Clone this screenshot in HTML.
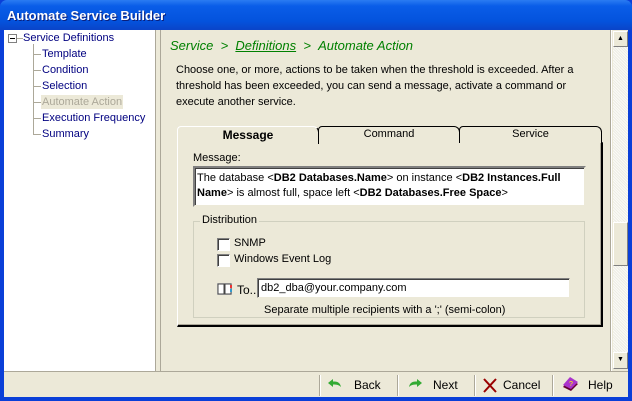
<!DOCTYPE html>
<html><head><style>
*{margin:0;padding:0;box-sizing:border-box}
body{width:632px;height:401px;position:relative;overflow:hidden;font-family:"Liberation Sans",sans-serif;font-size:11px;background:#0a3fd8}
.a{position:absolute}
#title{left:0;top:0;width:632px;height:30px;background:linear-gradient(#2b7cf2,#0a5de8 20%,#0453dd 70%,#0a44c8);border-radius:7px 7px 0 0;color:#fff;font-weight:bold;font-size:13px;padding:8px 0 0 7px;text-shadow:1px 1px #0a1e7a}
#win{left:4px;top:30px;width:624px;height:367px;background:#ece9d8}
#tree{left:4px;top:30px;width:152px;height:341px;background:#fff;border-right:1px solid #aca899}
.t{position:absolute;color:#000080;font-size:11px;white-space:nowrap}
.ln{position:absolute;background:#aca899}
.chk{position:absolute;width:13px;height:13px;background:#fff;border:1px solid #7f9db9;border-color:#808080 #fff #fff #808080;box-shadow:inset 1px 1px #404040}
.tab{position:absolute;top:126px;height:17px;background:#ece9d8;border:1px solid #000;border-bottom:none;border-radius:4px 6px 0 0;text-align:center;font-size:11px;padding-top:1px}
.btn{position:absolute;top:378px;font-size:12px}
.sep{position:absolute;top:375px;width:2px;height:21px;border-left:1px solid #aca899;border-right:1px solid #fff}
</style></head><body>
<div class="a" id="title">Automate Service Builder</div>
<div class="a" id="win"></div>
<div class="a" id="tree"></div>
<div class="a" style="left:160px;top:30px;width:1px;height:341px;background:#aca899"></div>
<div class="a" style="left:4px;top:371px;width:624px;height:1px;background:#aca899"></div>
<div class="a" style="left:8px;top:34px;width:9px;height:9px;border:1px solid #808080;background:#fff"></div>
<div class="ln" style="left:10px;top:38px;width:5px;height:1px;background:#000"></div>
<div class="ln" style="left:17px;top:38px;width:6px;height:1px"></div>
<div class="t" style="left:23px;top:32px">Service Definitions</div>
<div class="ln" style="left:33px;top:44px;width:1px;height:90px"></div>
<div class="ln" style="left:33px;top:54px;width:8px;height:1px"></div>
<div class="ln" style="left:33px;top:70px;width:8px;height:1px"></div>
<div class="ln" style="left:33px;top:86px;width:8px;height:1px"></div>
<div class="ln" style="left:33px;top:102px;width:8px;height:1px"></div>
<div class="ln" style="left:33px;top:118px;width:8px;height:1px"></div>
<div class="ln" style="left:33px;top:134px;width:8px;height:1px"></div>
<div class="t" style="left:42px;top:48px">Template</div>
<div class="t" style="left:42px;top:64px">Condition</div>
<div class="t" style="left:42px;top:80px">Selection</div>
<div class="t" style="left:41px;top:95px;background:#ece9d8;color:#aca899;padding:1px 1px">Automate Action</div>
<div class="t" style="left:42px;top:112px">Execution Frequency</div>
<div class="t" style="left:42px;top:128px">Summary</div>
<div class="a" style="left:170px;top:38px;color:#008000;font-style:italic;font-size:13px;white-space:nowrap">Service &nbsp;&gt; &nbsp;<u>Definitions</u> &nbsp;&gt; &nbsp;Automate Action</div>
<div class="a" style="left:176px;top:62px;width:420px;line-height:16px;font-size:11px;color:#000">Choose one, or more, actions to be taken when the threshold is exceeded. After a threshold has been exceeded, you can send a message, activate a command or execute another service.</div>
<div class="a" style="left:177px;top:142px;width:426px;height:185px;border:1px solid #fff;border-right:2px solid #000;border-bottom:2px solid #000;box-shadow:inset -1px -1px #aca899"></div>
<div class="tab" style="left:318px;width:142px">Command</div>
<div class="tab" style="left:459px;width:143px">Service</div>
<div class="tab" style="left:177px;width:142px;height:18px;font-weight:bold;font-size:12px;border-color:#fff #000 #000 #fff">Message</div>
<div class="a" style="left:193px;top:152px">Message:</div>
<div class="a" style="left:193px;top:166px;width:393px;height:41px;background:#fff;border:2px solid;border-color:#808080 #ece9d8 #ece9d8 #808080;box-shadow:inset 1px 1px #404040;padding:3px 2px;line-height:15px">The database &lt;<b>DB2 Databases.Name</b>&gt; on instance &lt;<b>DB2 Instances.Full Name</b>&gt; is almost full, space left &lt;<b>DB2 Databases.Free Space</b>&gt;</div>
<div class="a" style="left:193px;top:221px;width:392px;height:97px;border:1px solid #d0d0bf"></div>
<div class="a" style="left:200px;top:214px;background:#ece9d8;padding:0 2px">Distribution</div>
<div class="chk" style="left:217px;top:238px"></div>
<div class="a" style="left:234px;top:237px">SNMP</div>
<div class="chk" style="left:217px;top:254px"></div>
<div class="a" style="left:234px;top:253px">Windows Event Log</div>
<svg class="a" style="left:217px;top:282px" width="16" height="14"><rect x="0" y="1" width="15" height="12" fill="#ccc"/><rect x="1" y="2" width="6" height="10" fill="#fff" stroke="#444"/><rect x="8" y="2" width="6" height="10" fill="#fff" stroke="#444"/><rect x="13" y="3" width="2" height="3" fill="#e33"/><rect x="13" y="7" width="2" height="3" fill="#39c"/></svg>
<div class="a" style="left:237px;top:283px;font-size:12px">To...</div>
<div class="a" style="left:257px;top:278px;width:313px;height:20px;background:#fff;border:1px solid;border-color:#808080 #ece9d8 #ece9d8 #808080;box-shadow:inset 1px 1px #404040;padding:3px 3px">db2_dba@your.company.com</div>
<div class="a" style="left:264px;top:304px">Separate multiple recipients with a ';' (semi-colon)</div>
<div class="a" style="left:610px;top:30px;width:2px;height:341px;border-left:1px solid #aca899;border-right:1px solid #fff"></div>
<div class="a" style="left:613px;top:31px;width:15px;height:338px;background:#f5f4ee;background-image:repeating-linear-gradient(45deg,#eeede5 0 1px,#fafaf6 1px 2px)"></div>
<div class="a" style="left:613px;top:31px;width:15px;height:16px;background:#ece9d8;border:1px solid;border-color:#fff #808080 #808080 #fff;font-size:7px;text-align:center;line-height:13px">▲</div>
<div class="a" style="left:613px;top:222px;width:15px;height:44px;background:#ece9d8;border:1px solid;border-color:#fff #808080 #808080 #fff"></div>
<div class="a" style="left:613px;top:352px;width:15px;height:17px;background:#ece9d8;border:1px solid;border-color:#fff #808080 #808080 #fff;font-size:7px;text-align:center;line-height:14px">▼</div>
<div class="sep" style="left:319px"></div>
<div class="sep" style="left:397px"></div>
<div class="sep" style="left:474px"></div>
<div class="sep" style="left:552px"></div>
<svg class="a" style="left:327px;top:379px" width="16" height="10"><path d="M1 4 L6 0 L6 2.5 C10 2.5 13 3 14 8 C12 6 10 5.5 6 5.5 L6 8 Z" fill="#3a3"/></svg>
<div class="btn" style="left:354px">Back</div>
<svg class="a" style="left:407px;top:379px" width="16" height="10"><path d="M15 4 L10 0 L10 2.5 C6 2.5 3 3 2 8 C4 6 6 5.5 10 5.5 L10 8 Z" fill="#3a3"/></svg>
<div class="btn" style="left:433px">Next</div>
<svg class="a" style="left:483px;top:378px" width="14" height="15"><path d="M1 1 L13 14 M13 1 L1 14" stroke="#900" stroke-width="2"/></svg>
<div class="btn" style="left:503px">Cancel</div>
<svg class="a" style="left:561px;top:376px" width="18" height="17"><path d="M2 11 L10 15 L17 8 L9 3 Z" fill="#603"/><path d="M2 9 L9 1 L17 6 L10 13 Z" fill="#a3c"/><text x="8" y="10" font-size="7" fill="#ff0" font-family="Liberation Sans">?</text></svg>
<div class="btn" style="left:588px">Help</div>
</body></html>
